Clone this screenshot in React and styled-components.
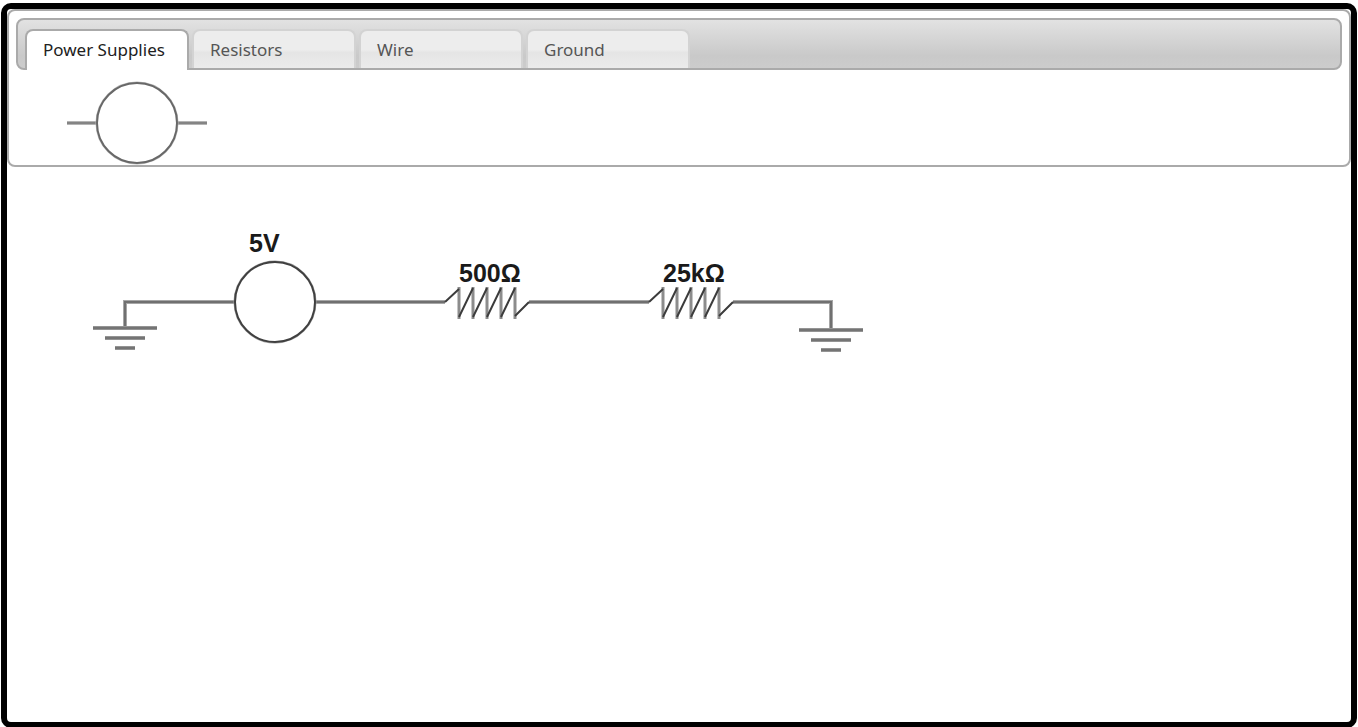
import React, { useState } from "react";
import styled, { createGlobalStyle } from "styled-components";

const GlobalStyle = createGlobalStyle`
  *, *::before, *::after { box-sizing: border-box; }
  html, body { height: 100%; margin: 0; overflow: hidden; }
  body {
    background: #fff;
    font-family: "Noto Sans", Verdana, sans-serif;
  }
`;

const Frame = styled.main`
  margin: 3px 1px 0;
  height: calc(100vh - 2px);
  background: #fff;
  border: 6px solid #000;
  border-radius: 10px;
`;

const TabsWidget = styled.section`
  padding: 7px;
  padding-bottom: 0;
  border: 2px solid #aaa;
  border-radius: 8px;
`;

const TabBar = styled.div`
  display: flex;
  gap: 3px;
  height: 52px;
  padding: 9px 7px 0;
  border: 2px solid #aaa;
  border-radius: 8px;
  background: linear-gradient(#e2e2e2, #c9c9c9 75%, #cccccc);
`;

const Tab = styled.button`
  width: 164px;
  height: ${(p) => (p.$active ? 41 : 39)}px;
  padding: 0 16px ${(p) => (p.$active ? 2 : 0)}px;
  text-align: left;
  font-family: inherit;
  font-size: 17px;
  line-height: 24px;
  color: ${(p) => (p.$active ? "#212121" : "#555")};
  background: ${(p) =>
    p.$active ? "#fff" : "linear-gradient(#ededed 50%, #e5e5e5 58%, #ebebeb)"};
  border: 2px solid ${(p) => (p.$active ? "#aaa" : "#d3d3d3")};
  border-bottom: 0;
  border-radius: 8px 8px 0 0;
  cursor: pointer;
`;

const Palette = styled.div`
  height: 95px;
  padding: 11px 0 0 51px;
`;

const Drawing = styled.svg`
  display: block;
  overflow: visible;
`;

const Workspace = styled.div`
  padding: 53px 0 0 83px;
`;

const Label = styled.text`
  font-family: "Liberation Sans", Arial, sans-serif;
  font-size: 25px;
  font-weight: 700;
  fill: #1a1a1a;
`;

const Stroke = styled.path`
  fill: none;
  stroke: ${(p) => p.$tone};
  stroke-width: ${(p) => p.$width}px;
`;

const Outline = styled.circle`
  fill: #fff;
  stroke: ${(p) => p.$tone};
  stroke-width: ${(p) => p.$width}px;
`;

const TABS = ["Power Supplies", "Resistors", "Wire", "Ground"];

function Wire({ d, edge = "#a6a6a6", core = "#707070" }) {
  return (
    <>
      <Stroke d={d} $tone={edge} $width={4} />
      <Stroke d={d} $tone={core} $width={2} />
    </>
  );
}

function Ring({ cx, cy, edge = "#a0a0a0", core = "#404040" }) {
  return (
    <>
      <Outline cx={cx} cy={cy} r="40" $tone={edge} $width={3} />
      <Outline cx={cx} cy={cy} r="40" $tone={core} $width={2} />
    </>
  );
}

function Resistor({ x, y }) {
  return (
    <g transform={`translate(${x} ${y})`}>
      <Stroke
        d="M14-15V17M28-15V17M42-15V17M56-15V17M70-15V17"
        $tone="#8c8c8c"
        $width={3}
      />
      <Stroke
        d="M0 0L14-13M14 15L28-14M28 15L42-14M42 15L56-14M56 15L70-14M70 14L84 0"
        $tone="#3c3c3c"
        $width={2}
      />
    </g>
  );
}

function Ground({ x, y }) {
  return (
    <g transform={`translate(${x} ${y})`}>
      <Wire d="M-32 0H32M-20 10H20M-10 20H10" edge="#949494" core="#747474" />
    </g>
  );
}

function Supply() {
  return (
    <Drawing width="140" height="84" role="img" aria-label="Power supply">
      <Wire d="M0 42H30M110 42H140" edge="#b4b4b4" core="#848484" />
      <Ring cx="70" cy="42" edge="#b8b8b8" core="#686868" />
    </Drawing>
  );
}

function Circuit() {
  return (
    <Drawing width="776" height="136" role="img" aria-label="Series circuit">
      <Wire d="M35 106V82H145M225 82H355M439 82H559M643 82H741V110" />
      <Ring cx="185" cy="82" />
      <Resistor x={355} y={82} />
      <Resistor x={559} y={82} />
      <Ground x={35} y={108} />
      <Ground x={741} y={110} />
      <Label x="159" y="32">5V</Label>
      <Label x="369" y="62">500Ω</Label>
      <Label x="573" y="62">25kΩ</Label>
    </Drawing>
  );
}

export default function App() {
  const [active, setActive] = useState(0);
  return (
    <>
      <GlobalStyle />
      <Frame>
        <TabsWidget>
          <TabBar role="tablist">
            {TABS.map((name, i) => (
              <Tab
                key={name}
                role="tab"
                aria-selected={i === active}
                $active={i === active}
                onClick={() => setActive(i)}
              >
                {name}
              </Tab>
            ))}
          </TabBar>
          <Palette role="tabpanel">{active === 0 && <Supply />}</Palette>
        </TabsWidget>
        <Workspace>
          <Circuit />
        </Workspace>
      </Frame>
    </>
  );
}
